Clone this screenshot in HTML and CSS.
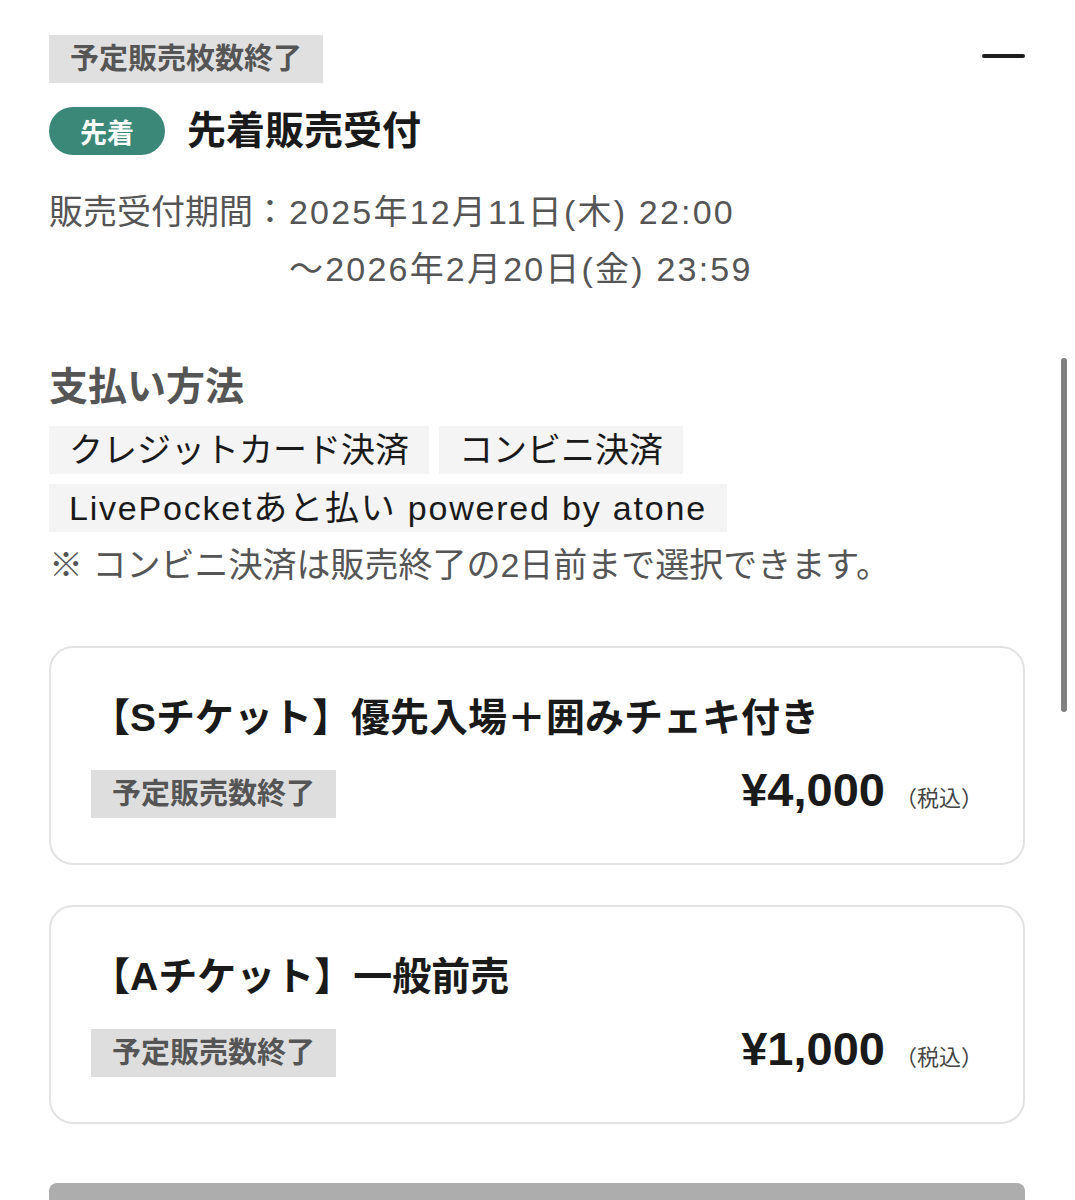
FILE: index.html
```html
<!DOCTYPE html>
<html lang="ja">
<head>
    <meta charset="UTF-8">
    <meta name="viewport" content="width=device-width, initial-scale=1.0">
    <title>先着販売受付</title>
    <link rel="stylesheet" href="styles.css">
</head>
<body>

    <div class="top-row">
        <span class="status">予定販売枚数終了</span>
        <span class="collapse"></span>
    </div>

    <div class="sale-head">
        <span class="pill">先着</span>
        <h1 class="sale-title">先着販売受付</h1>
    </div>

    <div class="period">
        <span class="period-label">販売受付期間：</span>
        <span class="period-date">2025年12月11日(木) 22:00</span>
        <span></span>
        <span class="period-date">～2026年2月20日(金) 23:59</span>
    </div>

    <h2 class="pay-title">支払い方法</h2>
    <div class="pay-tags">
        <span class="tag">クレジットカード決済</span>
        <span class="tag">コンビニ決済</span>
        <span class="tag tag-latin">LivePocketあと払い powered by atone</span>
    </div>
    <p class="note">※ コンビニ決済は販売終了の2日前まで選択できます。</p>

    <div class="ticket">
        <h3 class="ticket-name">【Sチケット】優先入場＋囲みチェキ付き</h3>
        <div class="ticket-row">
            <span class="sold-out">予定販売数終了</span>
            <span class="price">¥4,000<small>（税込）</small></span>
        </div>
    </div>

    <div class="ticket">
        <h3 class="ticket-name">【Aチケット】一般前売</h3>
        <div class="ticket-row">
            <span class="sold-out">予定販売数終了</span>
            <span class="price">¥1,000<small>（税込）</small></span>
        </div>
    </div>

    <div class="bottom-button"></div>

    <div class="scrollbar"></div>

</body>
</html>
```

FILE: styles.css
```css
body {
    font-family: "Liberation Sans", "Noto Sans CJK JP", sans-serif;
    margin: 0;
    padding: 35px 50px 0 49px;
    background-color: #ffffff;
    color: #222;
    height: 1200px;
    overflow: hidden;
    box-sizing: border-box;
}

.top-row {
    display: flex;
    justify-content: space-between;
    align-items: center;
}

.status {
    display: inline-block;
    height: 48px;
    line-height: 48px;
    padding: 0 21px;
    background-color: #e0e0e0;
    color: #555;
    font-size: 29px;
    font-weight: 700;
}

.collapse {
    width: 43px;
    height: 4px;
    border-radius: 2px;
    background-color: #1e1e1e;
    margin-top: -6px;
}

.sale-head {
    display: flex;
    align-items: center;
    margin-top: 23px;
}

.pill {
    display: flex;
    align-items: center;
    justify-content: center;
    width: 116px;
    height: 48px;
    border-radius: 24px;
    background-color: #3b8878;
    color: #fff;
    font-size: 27px;
    font-weight: 700;
}

.sale-title {
    margin: 0 0 0 22px;
    font-size: 39px;
    font-weight: 700;
    color: #1a1a1a;
    line-height: 50px;
}

.period {
    display: grid;
    grid-template-columns: auto 1fr;
    margin-top: 28px;
    font-size: 34px;
    line-height: 57px;
    color: #555;
}

.period-date {
    letter-spacing: 2.2px;
    margin-left: 2px;
}

.pay-title {
    margin: 64px 0 0;
    font-size: 39px;
    font-weight: 700;
    line-height: 50px;
    color: #555;
}

.pay-tags {
    display: flex;
    flex-wrap: wrap;
    gap: 10px;
    margin-top: 14px;
}

.tag {
    height: 48px;
    line-height: 48px;
    padding: 0 20px;
    background-color: #f4f4f4;
    font-size: 34px;
    color: #1a1a1a;
}

.tag-latin {
    letter-spacing: 1.8px;
}

.note {
    margin: 8px 0 0;
    font-size: 34px;
    line-height: 50px;
    color: #555;
}

.ticket {
    margin-top: 56px;
    border: 2px solid #e2e2e2;
    border-radius: 24px;
    padding: 45px 40px 45px 40px;
}

.ticket + .ticket {
    margin-top: 40px;
}

.ticket-name {
    margin: 0;
    font-size: 39px;
    font-weight: 700;
    line-height: 50px;
    color: #1a1a1a;
}

.ticket-row {
    display: flex;
    justify-content: space-between;
    align-items: center;
    height: 48px;
    margin-top: 27px;
}

.sold-out {
    height: 48px;
    line-height: 48px;
    padding: 0 21px;
    background-color: #dedede;
    color: #555;
    font-size: 29px;
    font-weight: 700;
}

.price {
    font-size: 47px;
    line-height: 48px;
    font-weight: 700;
    color: #1a1a1a;
}

.price small {
    margin-left: 10px;
    font-size: 22px;
    font-weight: 400;
    color: #444;
}

.bottom-button {
    margin-top: 59px;
    height: 40px;
    border-radius: 8px 8px 0 0;
    background-color: #adadad;
}

.scrollbar {
    position: fixed;
    top: 358px;
    right: 8px;
    width: 6px;
    height: 354px;
    border-radius: 3px;
    background-color: #808080;
}
```
